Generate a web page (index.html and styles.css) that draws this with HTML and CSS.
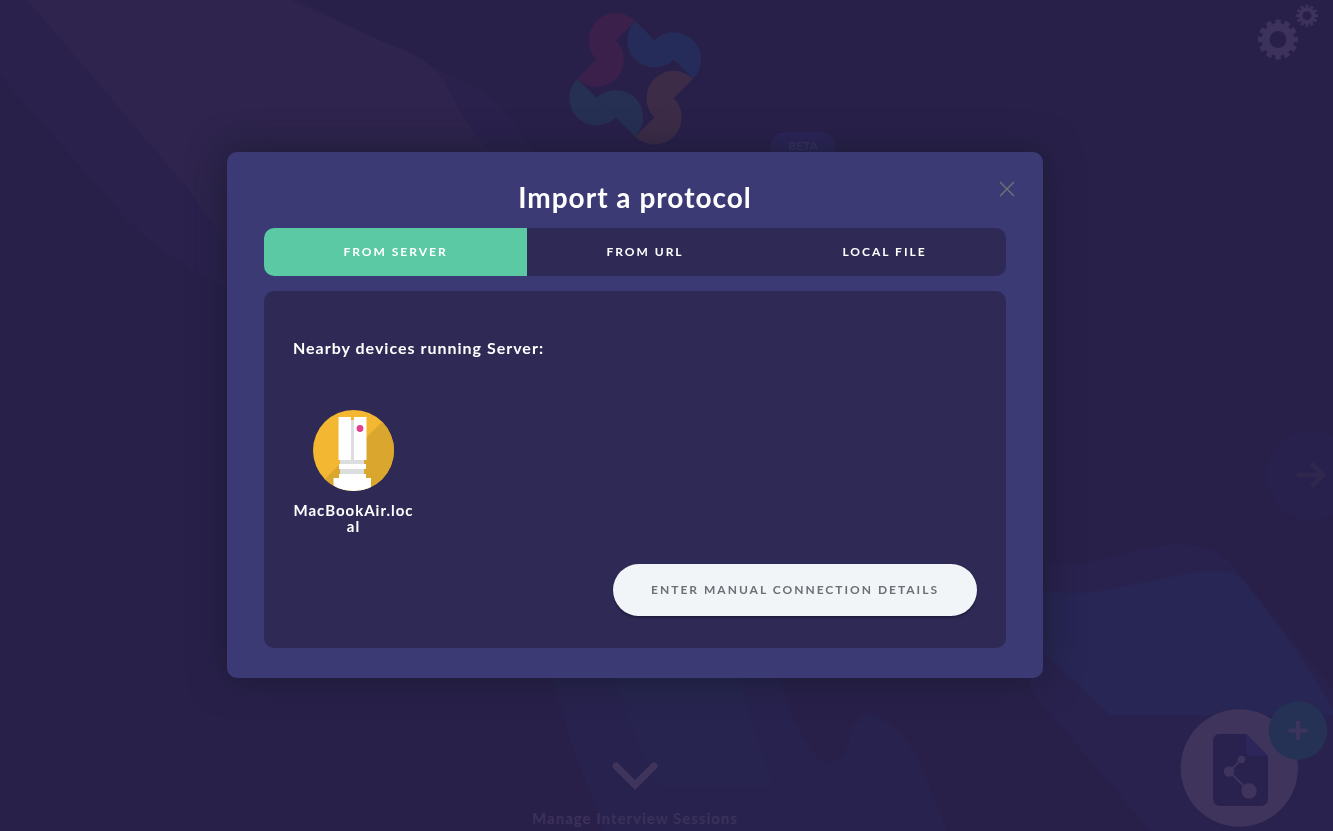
FILE: index.html
```html
<!DOCTYPE html>
<html lang="en">
<head>
<meta charset="utf-8">
<title>Import a protocol</title>
<link rel="stylesheet" href="styles.css">
</head>
<body>
<div class="home">
  <svg class="backdrop" viewBox="0 0 1333 831" preserveAspectRatio="none" aria-hidden="true">
    <path fill="#2a214d" d="M0 0H300L464 82Q500 98 515 125L540 160V290H230Q160 255 125 218L0 75Z"/>
    <path fill="#2e244d" d="M27 0H291L375 38L411 53Q436 66 446 84L464 118L490 152V250H230L193 195Z"/>
    <path fill="#28234e" d="M550 670L570 740L605 831H947L925 775Q905 725 870 712Q853 715 848 745Q840 765 825 762Q800 750 777 670Z"/>
    <path fill="#27254f" d="M615 670Q625 725 660 787H775Q750 730 740 670Z"/>
    <path fill="#29224e" d="M1030 563Q1085 568 1130 552Q1215 530 1238 573L1333 690V831H1150L1030 690Z"/>
    <path fill="#272654" d="M1030 590Q1080 598 1130 585L1185 574Q1230 566 1243 580Q1285 630 1333 708V715H1110L1030 640Z"/>
  </svg>

  <header class="home-header">
    <svg class="logo" viewBox="87 39 397 397" role="img" aria-label="Logo">
      <path fill="#3a204b" d="M286 63A82 82 0 0 0 170 179ZM228 121A82 82 0 0 1 112 237Z"/>
      <path fill="#252c5a" d="M286 63A82 82 0 0 0 402 179ZM344 121A82 82 0 0 1 460 237Z"/>
      <path fill="#3d2c47" d="M460 237A82 82 0 0 0 344 353ZM402 295A82 82 0 0 1 286 411Z"/>
      <path fill="#263052" d="M112 237A82 82 0 0 0 228 353ZM170 295A82 82 0 0 1 286 411Z"/>
    </svg>
    <span class="beta">BETA</span>
  </header>

  <button class="sessions" type="button">
    <svg class="chevron" viewBox="0 0 48 32" aria-hidden="true"><path d="M5 6L24 25L43 6"/></svg>
    Manage Interview Sessions
  </button>

  <button class="settings" type="button" aria-label="Settings">
    <svg viewBox="0 0 64 58" aria-hidden="true">
      <g fill="none" stroke="#3c325b">
        <circle cx="22" cy="35.500" r="12.400" stroke-width="8"/>
        <circle cx="22" cy="35.500" r="17.500" stroke-width="5" pathLength="24" stroke-dasharray="1.200 .8" stroke-dashoffset=".6"/>
        <circle cx="51" cy="11.700" r="6.500" stroke-width="4"/>
        <circle cx="51" cy="11.700" r="9.500" stroke-width="3" pathLength="24" stroke-dasharray="1.200 .8" stroke-dashoffset=".6"/>
      </g>
    </svg>
  </button>

  <button class="next" type="button" aria-label="Next">
    <svg viewBox="0 0 32 28" aria-hidden="true"><path d="M4 14H27M18 4L28 14L18 24"/></svg>
  </button>

  <button class="add" type="button" aria-label="Add a protocol">
    <svg viewBox="0 0 148 128" aria-hidden="true">
      <circle cx="59.300" cy="68" r="58.700" fill="#3e345c"/>
      <path fill="#29214e" d="M40 34H66L88 56V98Q88 106 80 106H41Q33 106 33 98V41Q33 34 40 34Z"/>
      <path fill="#2d265a" d="M66 34L88 56H72Q66 56 66 50Z"/>
      <path fill="none" stroke="#3e345c" stroke-width="2" d="M61.500 59.500L49 71.500L69 91"/>
      <g fill="#3e345c">
        <circle cx="61.500" cy="59.500" r="3.800"/>
        <circle cx="49" cy="71.500" r="5.300"/>
        <circle cx="69" cy="91" r="7.800"/>
      </g>
      <circle cx="118" cy="30.500" r="29.300" fill="#253255"/>
      <path stroke="#3c345c" stroke-width="4" d="M108.500 30.500H127.500M118 21V40"/>
    </svg>
  </button>
</div>

<div class="overlay">
  <section class="dialog" role="dialog" aria-modal="true" aria-labelledby="dialog-title">
    <h1 class="dialog-title" id="dialog-title">Import a protocol</h1>
    <button class="close" type="button" aria-label="Close">
      <svg viewBox="0 0 16 16" aria-hidden="true"><path d="M1 1L15 15M15 1L1 15"/></svg>
    </button>
    <nav class="tabs" role="tablist">
      <button class="tab tab-active" type="button" role="tab" aria-selected="true">FROM SERVER</button>
      <button class="tab" type="button" role="tab" aria-selected="false">FROM URL</button>
      <button class="tab" type="button" role="tab" aria-selected="false">LOCAL FILE</button>
    </nav>
    <div class="panel" role="tabpanel">
      <p class="panel-heading">Nearby devices running Server:</p>
      <button class="server" type="button">
        <svg class="server-icon" viewBox="0 0 81 81" aria-hidden="true">
          <defs><clipPath id="disc"><circle cx="40.500" cy="40.500" r="40.500"/></clipPath></defs>
          <g clip-path="url(#disc)">
            <path fill="#f3b732" d="M0 0H81V81H0Z"/>
            <path fill="#daa62e" d="M81 0V81H0Z"/>
            <path fill="#dcdddf" d="M36 10H43V50H47V72H27V50H36Z"/>
            <path fill="#dcdddf" d="M28 49H51V64H28Z"/>
            <path fill="#fff" d="M25.500 7H38V50H25.500ZM41 7H53.500V50H41ZM26 54H53V59H26ZM26 64H53V68H58V81H20.500V68H26Z"/>
            <circle cx="47" cy="18.500" r="3.400" fill="#e2408c"/>
          </g>
        </svg>
        <span class="server-name">MacBookAir.local</span>
      </button>
      <button class="manual" type="button">ENTER MANUAL CONNECTION DETAILS</button>
    </div>
  </section>
</div>
</body>
</html>
```
FILE: styles.css
```css
* { box-sizing: border-box; }

body {
  margin: 0;
  background: #29204a;
  color: #fff;
  font-family: Lato, "Noto Sans", sans-serif;
  font-weight: 700;
}

button {
  margin: 0;
  padding: 0;
  border: 0;
  background: none;
  color: inherit;
  font: inherit;
  cursor: pointer;
}

svg { display: block; }

.home {
  position: relative;
  display: flex;
  flex-direction: column;
  align-items: center;
  justify-content: space-between;
  min-height: 100vh;
  padding: 13px 63px 3px 0;
  overflow: hidden;
}

.backdrop {
  position: absolute;
  inset: 0;
  width: 100%;
  height: 100%;
}

.home-header {
  position: relative;
  display: flex;
  flex-direction: column;
  align-items: center;
  width: 400px;
}

.logo { width: 132px; height: 132px; }

.beta {
  position: absolute;
  top: 119px;
  right: 0;
  width: 64px;
  border-radius: 14px;
  background: #2b2558;
  color: #3b3363;
  font-size: 12px;
  line-height: 28px;
  text-align: center;
}

.sessions {
  position: relative;
  display: flex;
  flex-direction: column;
  align-items: center;
  gap: 16px;
  color: #3b315a;
  font-size: 15px;
  line-height: 20px;
  letter-spacing: 1px;
}

.chevron { width: 48px; height: 32px; }

.chevron path {
  fill: none;
  stroke: #3e345c;
  stroke-width: 7;
  stroke-linecap: round;
}

.settings {
  position: absolute;
  top: 4px;
  right: 13px;
  width: 64px;
}

.next {
  position: absolute;
  top: 430px;
  right: -23px;
  width: 90px;
  height: 90px;
  padding-left: 29px;
  border-radius: 50%;
  background: #29214d;
}

.next svg { width: 32px; height: 28px; }

.next path {
  fill: none;
  stroke: #30274f;
  stroke-width: 5;
  stroke-linecap: round;
}

.add {
  position: absolute;
  right: 5px;
  bottom: 3px;
  width: 148px;
}

.overlay {
  position: fixed;
  inset: 0;
  display: flex;
  align-items: center;
  justify-content: center;
  padding: 0 63px 2px 0;
}

.dialog {
  position: relative;
  width: 100%;
  max-width: 816px;
  padding: 28px 37px 30px;
  border-radius: 10px;
  background: #3b3a75;
  box-shadow: 0 0 36px rgba(24, 26, 48, .8);
}

.dialog-title {
  margin: 0 0 14px;
  font-size: 28px;
  font-weight: 700;
  line-height: 34px;
  letter-spacing: 1px;
  text-align: center;
}

.close {
  position: absolute;
  top: 29px;
  right: 28px;
  width: 16px;
}

.close path {
  fill: none;
  stroke: #6d6f76;
  stroke-width: 1.5;
}

.tabs {
  display: flex;
  margin-bottom: 15px;
  border-radius: 10px;
  background: #2e2a55;
  overflow: hidden;
}

.tab {
  flex: 1 1 auto;
  height: 48px;
  font-size: 12px;
  letter-spacing: 2px;
}

.tab-active { background: #5bcaa4; }

.panel {
  display: flex;
  flex-direction: column;
  align-items: flex-start;
  padding: 46px 29px 32px;
  border-radius: 10px;
  background: #2e2a55;
}

.panel-heading {
  margin: 0 0 52px;
  font-size: 16px;
  line-height: 21px;
  letter-spacing: 1px;
}

.server {
  display: flex;
  flex-direction: column;
  align-items: center;
  gap: 11px;
  width: 121px;
  margin-bottom: 30px;
}

.server-icon { width: 81px; height: 81px; }

.server-name {
  width: 100%;
  font-size: 15px;
  line-height: 16px;
  letter-spacing: 1px;
  word-break: break-all;
}

.manual {
  align-self: flex-end;
  height: 52px;
  padding: 0 38px;
  border-radius: 26px;
  background: #f2f5f7;
  box-shadow: 0 2px 2px #211d40;
  color: #6d6f76;
  font-size: 12px;
  letter-spacing: 2px;
}
```
